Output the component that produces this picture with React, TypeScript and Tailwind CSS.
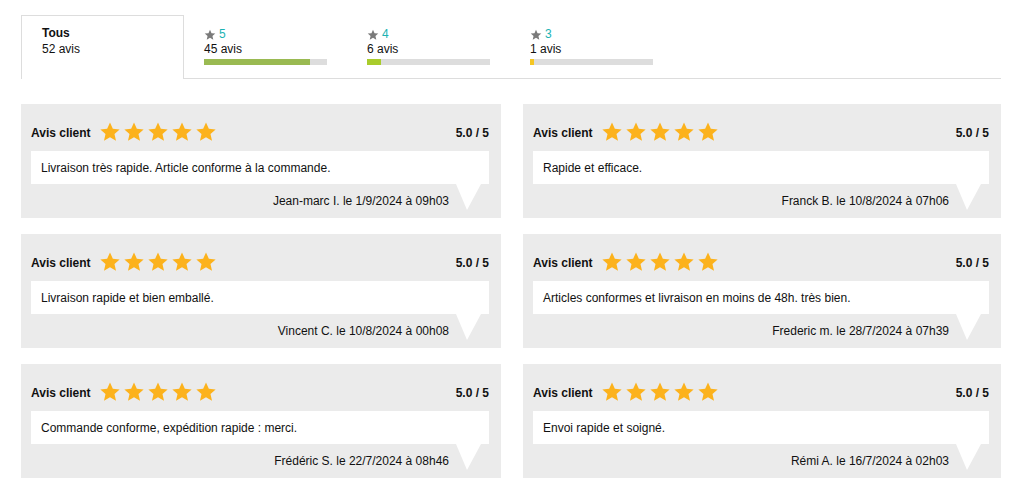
import React from "react";

const Star = ({ className }: { className: string }) => (
  <svg viewBox="0 0 24 24" className={className} fill="currentColor">
    <path d="M12 1.5l3.09 6.98 7.41.68-5.6 4.93 1.66 7.41L12 17.6l-6.56 3.9 1.66-7.41-5.6-4.93 7.41-.68z" />
  </svg>
);

const tabs = [
  { n: "5", count: "45 avis", pct: 86.5, color: "bg-[#9aba52]" },
  { n: "4", count: "6 avis", pct: 11.5, color: "bg-[#a9cc2c]" },
  { n: "3", count: "1 avis", pct: 3.2, color: "bg-[#f5c623]" },
];

const reviews = [
  ["Livraison très rapide. Article conforme à la commande.", "Jean-marc I. le 1/9/2024 à 09h03"],
  ["Rapide et efficace.", "Franck B. le 10/8/2024 à 07h06"],
  ["Livraison rapide et bien emballé.", "Vincent C. le 10/8/2024 à 00h08"],
  ["Articles conformes et livraison en moins de 48h. très bien.", "Frederic m. le 28/7/2024 à 07h39"],
  ["Commande conforme, expédition rapide : merci.", "Frédéric S. le 22/7/2024 à 08h46"],
  ["Envoi rapide et soigné.", "Rémi A. le 16/7/2024 à 02h03"],
];

function Card({ text, author }: { text: string; author: string }) {
  return (
    <div className="bg-[#ebebeb] h-[114px] pt-[15px] pl-[10px] pr-[12px]">
      <div className="flex items-center h-[28px]">
        <span className="font-bold text-[12px] text-[#111]">Avis client</span>
        <div className="flex gap-[2px] ml-[8px] -mt-[3px] text-[#fcb21c]">
          {[0, 1, 2, 3, 4].map((i) => (
            <Star key={i} className="w-[22px] h-[22px]" />
          ))}
        </div>
        <span className="ml-auto font-bold text-[12px] text-[#111]">5.0 / 5</span>
      </div>
      <div className="mt-[4px] bg-white h-[33px] flex items-center pl-[10px] text-[12px] text-[#111]">
        {text}
      </div>
      <div className="flex justify-end items-start">
        <span className="text-[12px] leading-[18px] text-[#111] mt-[8px]">{author}</span>
        <svg width="25" height="26" viewBox="0 0 25 26" className="ml-[7px] mr-[8px]">
          <polygon points="0,0 25,0 11,26" fill="#fff" />
        </svg>
      </div>
    </div>
  );
}

export default function App() {
  return (
    <div
      className="w-[1014px] h-[501px] bg-white pt-[15px] pl-[21px] pr-[13px]"
      style={{ fontFamily: '"Liberation Sans", Arial, sans-serif' }}
    >
      <div className="flex border-b border-[#dddddd] h-[64px]">
        <div className="w-[163px] border border-b-0 border-[#dddddd] bg-white -mb-px pl-[20px] pt-[10px] text-[12px] leading-[15px] text-[#111]">
          <div className="font-bold">Tous</div>
          <div className="mt-[1px]">52 avis</div>
        </div>
        {tabs.map((t) => (
          <div key={t.n} className="w-[163px] pl-[20px] pt-[12px] text-[12px] leading-[15px] text-[#111]">
            <div className="flex items-center gap-[3px]">
              <Star className="w-[12px] h-[12px] text-[#7a7a7a]" />
              <span className="text-[#1cb3b3]">{t.n}</span>
            </div>
            <div>{t.count}</div>
            <div className="mt-[2px] w-[123px] h-[6px] bg-[#dddddd]">
              <div className={`h-full ${t.color}`} style={{ width: `${t.pct}%` }} />
            </div>
          </div>
        ))}
      </div>
      <div className="grid grid-cols-[480px_478px] gap-x-[22px] gap-y-[16px] mt-[25px]">
        {reviews.map(([text, author]) => (
          <Card key={author} text={text} author={author} />
        ))}
      </div>
    </div>
  );
}
